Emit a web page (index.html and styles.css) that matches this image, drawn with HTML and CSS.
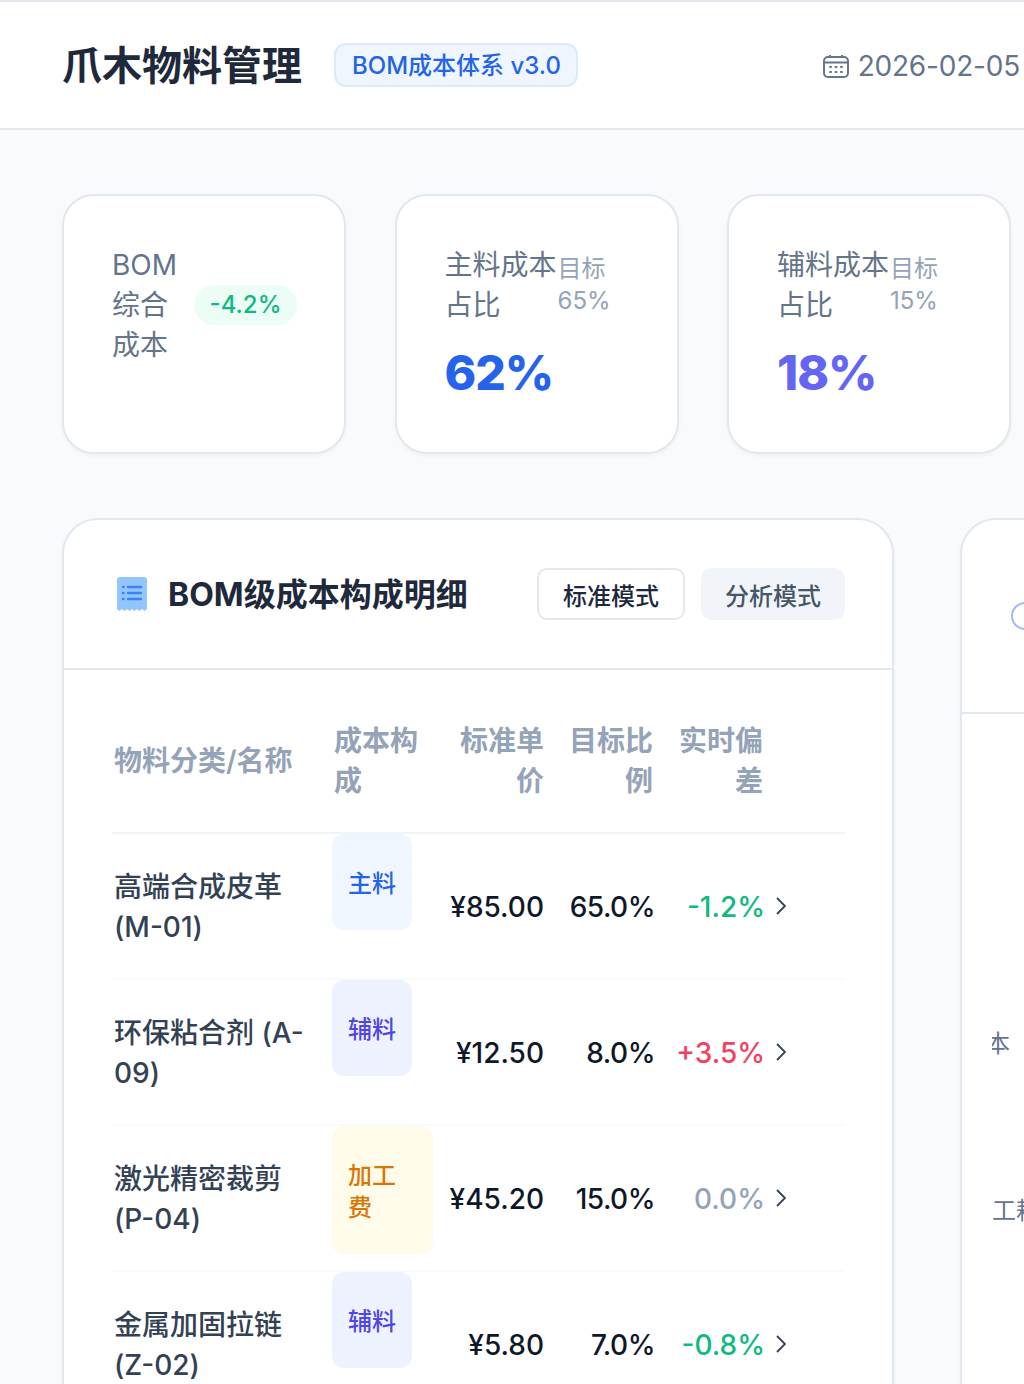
FILE: index.html
```html
<!DOCTYPE html>
<html lang="zh-CN">
  <head>
    <meta charset="UTF-8" />
    <meta name="viewport" content="width=device-width, initial-scale=1.0" />
    <title>爪木物料管理</title>
    <link rel="stylesheet" href="styles.css">
  </head>
  <body>
    <header class="topbar">
      <div class="brand">
        <h1>爪木物料管理</h1>
        <span class="version">BOM成本体系 v3.0</span>
      </div>
      <div class="date">
        <svg class="date-icon" viewBox="0 0 26 24" fill="none" stroke="#64748b" stroke-width="2">
          <rect x="1" y="3" width="24" height="20" rx="4" />
          <path d="M1 8.5h24M7 1v3M19 1v3" />
          <path d="M7 13h1M12.5 13h1M18 13h1M7 18h1M12.5 18h1M18 18h1" stroke-linecap="round" />
        </svg>
        <span>2026-02-05</span>
      </div>
    </header>

    <section class="stats">
      <div class="stat">
        <div class="stat-top">
          <div class="stat-label stat-label-wrap">BOM综合成本</div>
          <span class="trend">-4.2%</span>
        </div>
      </div>
      <div class="stat">
        <div class="stat-top">
          <div class="stat-label">主料成本占比</div>
          <div class="stat-target">目标<br>65%</div>
        </div>
        <div class="stat-value blue">62%</div>
      </div>
      <div class="stat">
        <div class="stat-top">
          <div class="stat-label">辅料成本占比</div>
          <div class="stat-target">目标<br>15%</div>
        </div>
        <div class="stat-value indigo">18%</div>
      </div>
    </section>

    <main class="layout">
      <section class="card">
        <div class="card-head">
          <div class="card-title">
            <svg class="receipt" viewBox="0 0 30 34">
              <path fill="#93c5fd" d="M3 0h24a3 3 0 0 1 3 3v29l-2.5 2-2.500-2-2.500 2-2.500-2-2.500 2-2.500-2-2.500 2-2.500-2-2.500 2-2.500-2-2.500 2L0 32V3a3 3 0 0 1 3-3z" />
              <path stroke="#3b82f6" stroke-width="2.400" stroke-linecap="round" d="M11 10h13M11 16h13M11 22h13M6 10h.5M6 16h.5M6 22h.5" />
            </svg>
            <h2>BOM级成本构成明细</h2>
          </div>
          <div class="modes">
            <button class="mode active">标准模式</button>
            <button class="mode">分析模式</button>
          </div>
        </div>
        <div class="card-body">
          <table class="bom">
            <colgroup>
              <col class="c-name"><col class="c-type"><col class="c-price"><col class="c-ratio"><col class="c-dev"><col class="c-arrow">
            </colgroup>
            <thead>
              <tr>
                <th class="name-head">物料分类/名称</th>
                <th class="type-head">成本构成</th>
                <th class="num">标准单价</th>
                <th class="num inset">目标比例</th>
                <th class="num inset">实时偏差</th>
                <th></th>
              </tr>
            </thead>
            <tbody>
              <tr>
                <td class="name">高端合成皮革 (M-01)</td>
                <td class="type"><span class="tag tag-main">主料</span></td>
                <td class="num">¥85.00</td>
                <td class="num ratio">65.0%</td>
                <td class="num good">-1.2%</td>
                <td><svg class="chevron" viewBox="0 0 10 18"><polyline points="1,1 9,9 1,17" /></svg></td>
              </tr>
              <tr>
                <td class="name">环保粘合剂 (A-09)</td>
                <td class="type"><span class="tag tag-aux">辅料</span></td>
                <td class="num">¥12.50</td>
                <td class="num ratio">8.0%</td>
                <td class="num bad">+3.5%</td>
                <td><svg class="chevron" viewBox="0 0 10 18"><polyline points="1,1 9,9 1,17" /></svg></td>
              </tr>
              <tr>
                <td class="name">激光精密裁剪 (P-04)</td>
                <td class="type"><span class="tag tag-work">加工费</span></td>
                <td class="num">¥45.20</td>
                <td class="num ratio">15.0%</td>
                <td class="num flat">0.0%</td>
                <td><svg class="chevron" viewBox="0 0 10 18"><polyline points="1,1 9,9 1,17" /></svg></td>
              </tr>
              <tr>
                <td class="name">金属加固拉链 (Z-02)</td>
                <td class="type"><span class="tag tag-aux">辅料</span></td>
                <td class="num">¥5.80</td>
                <td class="num ratio">7.0%</td>
                <td class="num good">-0.8%</td>
                <td><svg class="chevron" viewBox="0 0 10 18"><polyline points="1,1 9,9 1,17" /></svg></td>
              </tr>
            </tbody>
          </table>
        </div>
      </section>

      <aside class="card side">
        <div class="side-head"><span class="ring"></span></div>
        <div class="side-body">
          <div class="axis-clip"><span>成本</span></div>
          <div class="axis-label">工耗</div>
        </div>
      </aside>
    </main>
  </body>
</html>
```

FILE: styles.css
```css
html,
body {
  height: 1384px;
  overflow: hidden;
}

body {
  margin: 0;
  background: #f8fafc;
  color: #1e293b;
  font-family: Inter, "Noto Sans CJK SC", sans-serif;
}

h1,
h2 {
  margin: 0;
}

/* top bar */
.topbar {
  height: 126px;
  display: flex;
  align-items: center;
  justify-content: space-between;
  padding: 0 4px 0 62px;
  background: white;
  border-top: 2px solid #e2e8f0;
  border-bottom: 2px solid #e2e8f0;
}

.brand {
  display: flex;
  align-items: center;
  gap: 32px;
}

.brand h1 {
  padding-top: 2px;
  font-size: 40px;
  line-height: 56px;
  font-weight: 700;
}

.version {
  padding: 5px 15px 3px 16px;
  font-size: 24px;
  line-height: 32px;
  font-weight: 500;
  color: #2563eb;
  background: #eff6ff;
  border: 2px solid #dbeafe;
  border-radius: 12px;
}

.date {
  display: flex;
  align-items: center;
  gap: 9px;
  padding-top: 2px;
  font-size: 28px;
  letter-spacing: -0.2px;
  color: #64748b;
}

.date-icon {
  width: 26px;
  height: 24px;
}

/* stat cards */
.stats {
  display: flex;
  gap: 48.5px;
  padding: 64px 0 64px 62px;
}

.stat {
  flex: none;
  box-sizing: border-box;
  width: 284px;
  height: 260px;
  padding: 49px 47px 48px 48px;
  background: white;
  border: 2px solid #e2e8f0;
  border-radius: 32px;
  box-shadow: 0 2px 4px rgba(15, 23, 42, 0.04);
}

.stat-top {
  display: flex;
  align-items: center;
  justify-content: space-between;
}

.stat-label {
  flex: 0 0 112px;
  font-size: 28px;
  line-height: 40px;
  color: #64748b;
}

.stat-label-wrap {
  flex: 1 1 0;
}

.trend {
  flex: none;
  padding: 4px 15.5px;
  font-size: 24px;
  line-height: 32px;
  font-weight: 500;
  color: #10b981;
  background: #ecfdf5;
  border-radius: 20px;
}

.stat-target {
  flex: 1;
  margin-left: 1px;
  font-size: 24px;
  line-height: 32px;
  color: #94a3b8;
}

.stat-value {
  margin-top: 8px;
  font-size: 48px;
  line-height: 80px;
  font-weight: 800;
  letter-spacing: -1px;
}

.blue {
  color: #2563eb;
}

.indigo {
  color: #6366f1;
}

/* main layout */
.layout {
  display: flex;
  align-items: flex-start;
  gap: 66px;
  padding-left: 62px;
}

.card {
  flex: none;
  box-sizing: border-box;
  width: 832px;
  background: white;
  border: 2px solid #e2e8f0;
  border-radius: 36px;
  box-shadow: 0 2px 4px rgba(15, 23, 42, 0.04);
}

.card-head {
  height: 148px;
  display: flex;
  align-items: center;
  justify-content: space-between;
  padding: 0 47px 0 53px;
  border-bottom: 2px solid #e2e8f0;
}

.card-title {
  display: flex;
  align-items: center;
  gap: 21px;
}

.card-title h2 {
  padding-top: 2px;
  font-size: 32px;
  line-height: 44px;
  font-weight: 700;
}

.receipt {
  width: 30px;
  height: 34px;
}

.modes {
  display: flex;
  gap: 16px;
}

.mode {
  height: 52px;
  padding: 0 24px;
  font: 500 24px Inter, "Noto Sans CJK SC", sans-serif;
  color: #475569;
  background: #f1f5f9;
  border: none;
  border-radius: 10px;
}

.mode.active {
  color: #1e293b;
  background: white;
  border: 2px solid #e2e8f0;
}

.card-body {
  padding: 20px 48px 0 48px;
}

/* table */
.bom {
  width: 733px;
  table-layout: fixed;
  border-collapse: collapse;
}

.c-name { width: 220px; }
.c-type { width: 117px; }
.c-price { width: 95px; }
.c-ratio { width: 111px; }
.c-dev { width: 110px; }
.c-arrow { width: 80px; }

.bom th,
.bom td {
  padding: 0;
  font-size: 28px;
  line-height: 40px;
  vertical-align: middle;
  text-align: left;
}

.bom th {
  padding: 31px 0;
  font-weight: 600;
  color: #94a3b8;
}

.bom thead tr {
  border-bottom: 2px solid #f1f5f9;
}

.bom tbody tr {
  border-bottom: 2px solid #f8fafc;
}

.bom th.name-head {
  padding-left: 2px;
}

.bom th.type-head {
  padding-left: 2px;
  padding-right: 16px;
}

.bom th.num,
.bom td.num {
  text-align: right;
}

.bom th.inset {
  padding-right: 2px;
}

.bom td.num {
  padding-top: 2px;
  font-weight: 500;
  color: #0f172a;
}

.bom td.ratio {
  letter-spacing: -0.5px;
}

.bom td.name {
  padding: 33px 14px 31px 2px;
  font-weight: 500;
  color: #334155;
}

.bom td.type {
  padding-right: 16px;
  vertical-align: top;
}

.tag {
  display: inline-block;
  vertical-align: top;
  padding: 34px 16px 30px;
  font-size: 24px;
  line-height: 32px;
  font-weight: 500;
  border-radius: 12px;
}

.tag-main {
  color: #2563eb;
  background: #eff6ff;
}

.tag-aux {
  color: #4f46e5;
  background: #eef2ff;
}

.tag-work {
  color: #d97706;
  background: #fffbeb;
}

.bom td.good {
  color: #10b981;
}

.bom td.bad {
  color: #f43f5e;
}

.bom td.flat {
  color: #94a3b8;
}

.chevron {
  display: block;
  width: 10px;
  height: 18px;
  margin-left: 11px;
  fill: none;
  stroke: #334155;
  stroke-width: 1.800;
}

/* right panel, cut off by the window */
.side {
  width: 420px;
  height: 900px;
}

.side-head {
  height: 192px;
  display: flex;
  align-items: center;
  padding-left: 49px;
  border-bottom: 2px solid #e2e8f0;
}

.ring {
  flex: none;
  box-sizing: border-box;
  width: 28px;
  height: 28px;
  border: 2px solid #a5b4fc;
  border-radius: 50%;
}

.side-body {
  padding: 314px 0 0 30px;
  font-size: 24px;
  line-height: 32px;
  color: #64748b;
}

.axis-clip {
  width: 18px;
  display: flex;
  justify-content: flex-end;
  overflow: hidden;
  white-space: nowrap;
}

.axis-clip span {
  flex: none;
}

.axis-label {
  margin-top: 135px;
  white-space: nowrap;
}
```
